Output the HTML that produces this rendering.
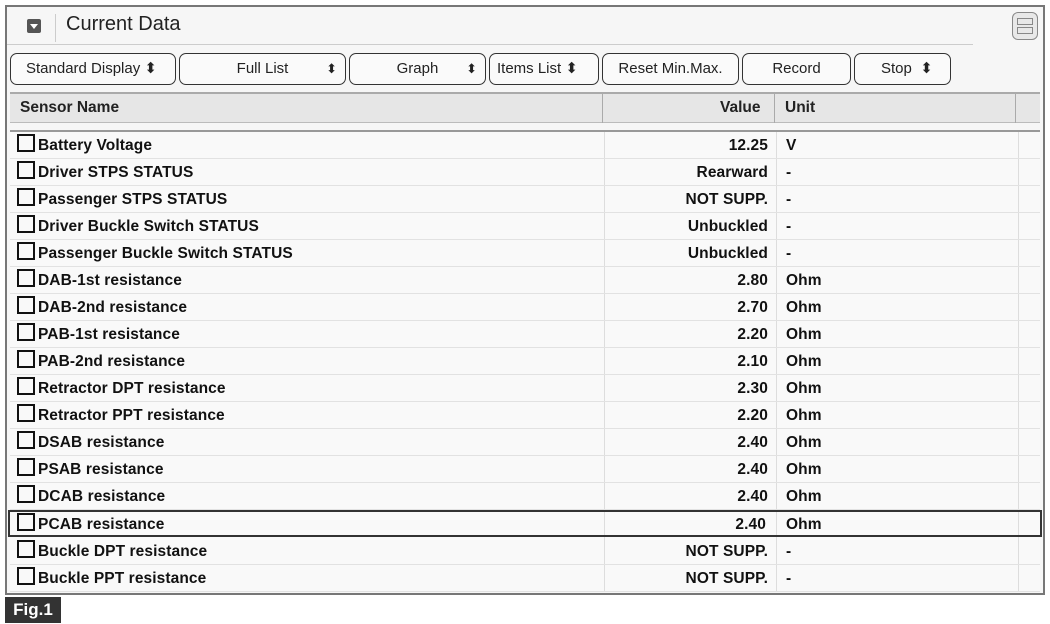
<!DOCTYPE html>
<html><head><meta charset="utf-8"><style>
*{margin:0;padding:0;box-sizing:border-box}
body{width:1050px;height:624px;background:#fff;position:relative;font-family:"Liberation Sans",sans-serif;overflow:hidden}
.frame{position:absolute;left:5px;top:5px;width:1040px;height:590px;border:2px solid #777;background:#f6f6f6}
.abs{position:absolute}
.btn{position:absolute;top:53px;height:32px;border:1.5px solid #333;border-radius:7px;background:#fafafa;font-size:15px;color:#222;line-height:29px}
.btn .t{position:absolute;left:0;right:0;text-align:center}
.arr{position:absolute;top:0;font-size:13px}
.row{position:absolute;left:10px;width:1030px;height:27px;border-bottom:1px solid #e2e2e2;font-weight:bold;font-size:15.5px;color:#111;line-height:28px;letter-spacing:0.1px}
.row .n{position:absolute;left:7px}
.row .n:before{content:"";display:inline-block;width:14px;height:14px;border:2px solid #111;margin-right:3px;vertical-align:-2px}
.row .v{position:absolute;right:272px;text-align:right}
.row .u{position:absolute;left:776px}
.vl{position:absolute;width:1px;background:#ddd}
.hd{position:absolute;top:99px;font-weight:bold;font-size:15.5px;color:#222}
</style></head><body>
<div class="frame"></div>
<div class="abs" style="left:27px;top:19px;width:14px;height:14px;background:#555;border-radius:2px"></div>
<div class="abs" style="left:30px;top:24px;width:0;height:0;border-left:4px solid transparent;border-right:4px solid transparent;border-top:5px solid #fff"></div>
<div class="abs" style="left:55px;top:14px;width:1px;height:28px;background:#ccc"></div>
<div class="abs" style="left:66px;top:13px;font-size:20px;color:#222">Current Data</div>
<div class="abs" style="left:7px;top:44px;width:966px;height:1px;background:#ccc"></div>
<div class="abs" style="left:1012px;top:12px;width:26px;height:28px;border:1.5px solid #888;border-radius:6px;background:#e8e8e8"></div>
<div class="abs" style="left:1017px;top:18px;width:16px;height:7px;border:1px solid #888"></div>
<div class="abs" style="left:1017px;top:27px;width:16px;height:7px;border:1px solid #888"></div>

<div class="btn" style="left:10px;width:166px"><span class="abs" style="left:15px">Standard Display ⬍</span></div>
<div class="btn" style="left:179px;width:167px"><span class="t">Full List</span><span class="arr" style="right:8px">⬍</span></div>
<div class="btn" style="left:349px;width:137px"><span class="t">Graph</span><span class="arr" style="right:8px">⬍</span></div>
<div class="btn" style="left:489px;width:110px"><span class="abs" style="left:7px">Items List ⬍</span></div>
<div class="btn" style="left:602px;width:137px"><span class="t">Reset Min.Max.</span></div>
<div class="btn" style="left:742px;width:109px"><span class="t">Record</span></div>
<div class="btn" style="left:854px;width:97px"><span class="abs" style="left:26px">Stop &nbsp;⬍</span></div>

<div class="abs" style="left:10px;top:92px;width:1030px;height:31px;background:#e6e6e6;border-top:2px solid #aaa;border-bottom:1px solid #bbb"></div>
<div class="hd" style="left:20px">Sensor Name</div>
<div class="hd" style="left:720px">Value</div>
<div class="hd" style="left:785px">Unit</div>
<div class="abs" style="left:602px;top:93px;width:1px;height:30px;background:#aaa"></div>
<div class="abs" style="left:774px;top:93px;width:1px;height:30px;background:#aaa"></div>
<div class="abs" style="left:1015px;top:93px;width:1px;height:30px;background:#aaa"></div>
<div class="abs" style="left:10px;top:130px;width:1030px;height:2px;background:#999"></div>
<div class="abs" style="left:10px;top:132px;width:1030px;height:460px;background:#f9f9f9"></div>
<div class="vl" style="left:604px;top:132px;height:460px"></div>
<div class="vl" style="left:776px;top:132px;height:460px"></div>
<div class="vl" style="left:1018px;top:132px;height:460px"></div>

<div class="row" style="top:132px"><span class="n">Battery Voltage</span><span class="v">12.25</span><span class="u">V</span></div>
<div class="row" style="top:159px"><span class="n">Driver STPS STATUS</span><span class="v">Rearward</span><span class="u">-</span></div>
<div class="row" style="top:186px"><span class="n">Passenger STPS STATUS</span><span class="v">NOT SUPP.</span><span class="u">-</span></div>
<div class="row" style="top:213px"><span class="n">Driver Buckle Switch STATUS</span><span class="v">Unbuckled</span><span class="u">-</span></div>
<div class="row" style="top:240px"><span class="n">Passenger Buckle Switch STATUS</span><span class="v">Unbuckled</span><span class="u">-</span></div>
<div class="row" style="top:267px"><span class="n">DAB-1st resistance</span><span class="v">2.80</span><span class="u">Ohm</span></div>
<div class="row" style="top:294px"><span class="n">DAB-2nd resistance</span><span class="v">2.70</span><span class="u">Ohm</span></div>
<div class="row" style="top:321px"><span class="n">PAB-1st resistance</span><span class="v">2.20</span><span class="u">Ohm</span></div>
<div class="row" style="top:348px"><span class="n">PAB-2nd resistance</span><span class="v">2.10</span><span class="u">Ohm</span></div>
<div class="row" style="top:375px"><span class="n">Retractor DPT resistance</span><span class="v">2.30</span><span class="u">Ohm</span></div>
<div class="row" style="top:402px"><span class="n">Retractor PPT resistance</span><span class="v">2.20</span><span class="u">Ohm</span></div>
<div class="row" style="top:429px"><span class="n">DSAB resistance</span><span class="v">2.40</span><span class="u">Ohm</span></div>
<div class="row" style="top:456px"><span class="n">PSAB resistance</span><span class="v">2.40</span><span class="u">Ohm</span></div>
<div class="row" style="top:483px"><span class="n">DCAB resistance</span><span class="v">2.40</span><span class="u">Ohm</span></div>
<div class="row" style="top:510px;border:2px solid #333;left:8px;width:1034px;line-height:25px"><span class="n" style="left:7px">PCAB resistance</span><span class="v" style="right:274px">2.40</span><span class="u" style="left:776px">Ohm</span></div>
<div class="row" style="top:538px"><span class="n">Buckle DPT resistance</span><span class="v">NOT SUPP.</span><span class="u">-</span></div>
<div class="row" style="top:565px"><span class="n">Buckle PPT resistance</span><span class="v">NOT SUPP.</span><span class="u">-</span></div>

<div class="abs" style="left:5px;top:597px;width:56px;height:26px;background:#333;color:#fff;font-weight:bold;font-size:17px;line-height:26px;text-align:center">Fig.1</div>
</body></html>
